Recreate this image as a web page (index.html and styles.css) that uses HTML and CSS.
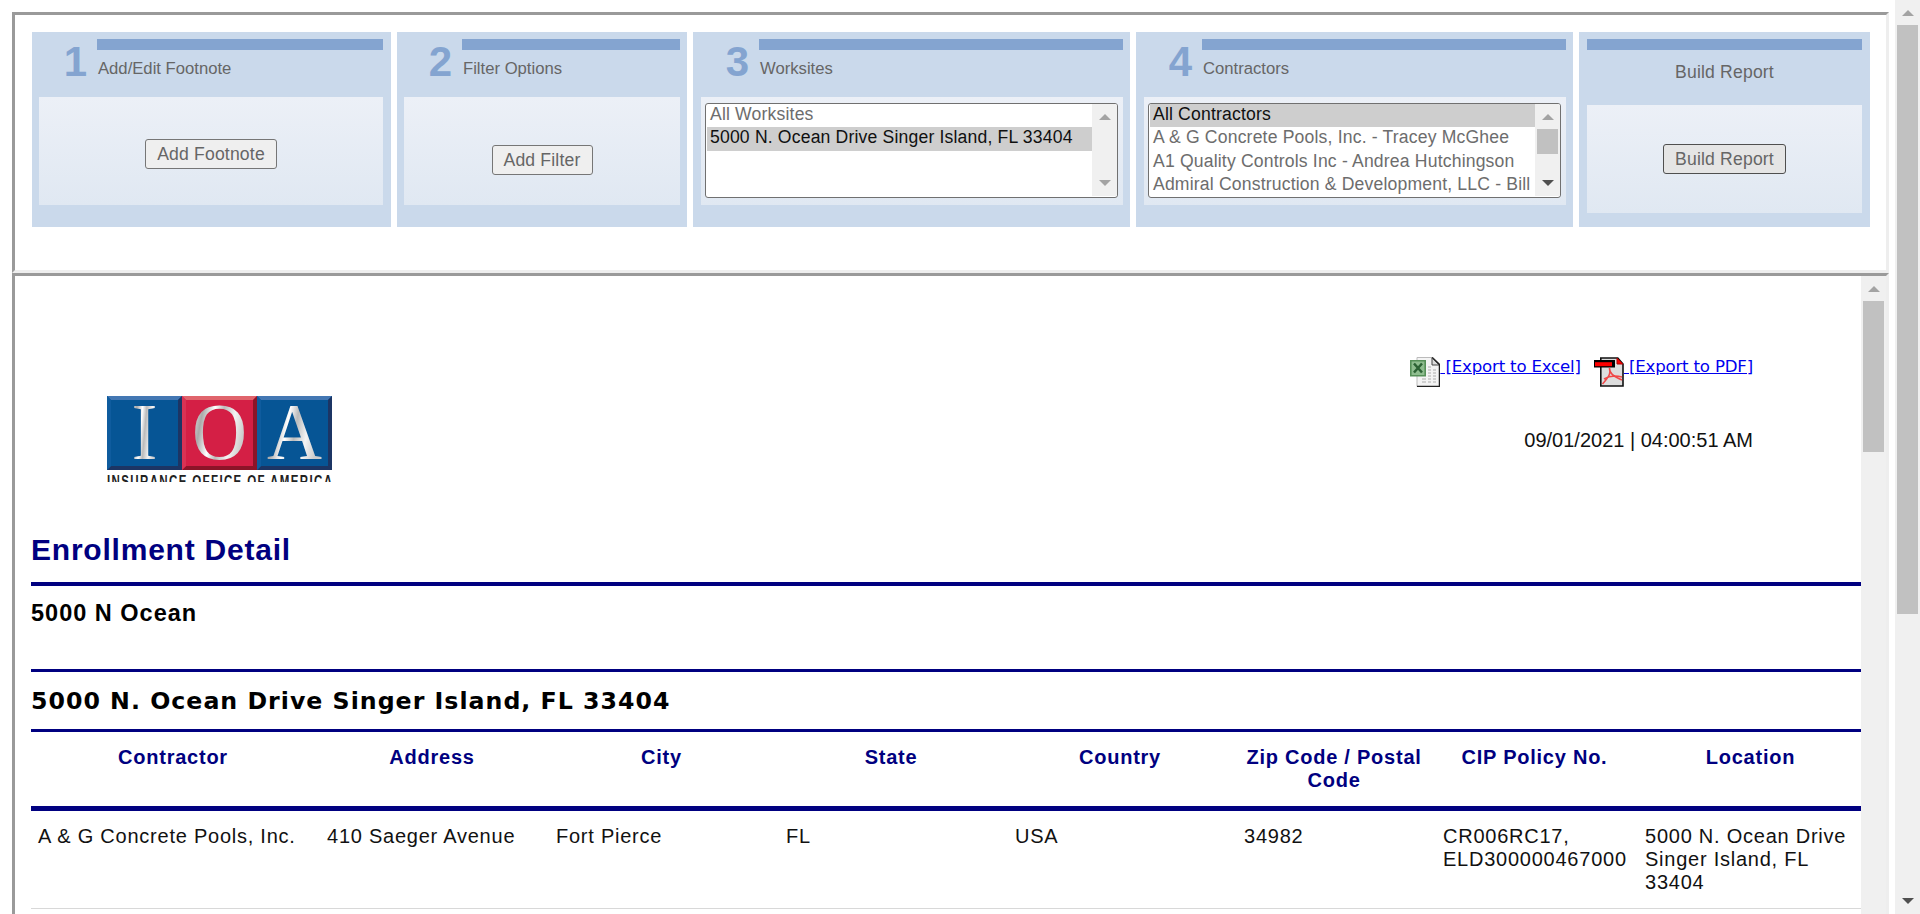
FILE: index.html
```html
<!DOCTYPE html>
<html lang="en">
<head>
<meta charset="utf-8">
<title>Enrollment Detail</title>
<link rel="stylesheet" href="styles.css">
</head>
<body>
<div class="page">
<main class="frames">
  <section class="frame options">
    <div class="panel p1">
      <div class="head"><span class="num">1</span><div class="title"><span class="label">Add/Edit Footnote</span></div></div>
      <div class="well"><button class="btn b1">Add Footnote</button></div>
    </div>
    <div class="panel p2">
      <div class="head"><span class="num">2</span><div class="title"><span class="label">Filter Options</span></div></div>
      <div class="well low"><button class="btn b2">Add Filter</button></div>
    </div>
    <div class="panel p3">
      <div class="head"><span class="num">3</span><div class="title"><span class="label">Worksites</span></div></div>
      <div class="well"><div class="list">
        <ul class="items"><li>All Worksites</li><li class="sel">5000 N. Ocean Drive Singer Island, FL 33404</li></ul>
        <div class="bar"><i class="up"></i><i class="down dim"></i></div>
      </div></div>
    </div>
    <div class="panel p4">
      <div class="head"><span class="num">4</span><div class="title"><span class="label">Contractors</span></div></div>
      <div class="well"><div class="list">
        <ul class="items"><li class="sel">All Contractors</li><li>A &amp; G Concrete Pools, Inc. - Tracey McGhee</li><li>A1 Quality Controls Inc - Andrea Hutchingson</li><li>Admiral Construction &amp; Development, LLC - Bill</li></ul>
        <div class="bar"><i class="up"></i><b class="thumb"></b><i class="down"></i></div>
      </div></div>
    </div>
    <div class="panel p5">
      <div class="build">Build Report</div>
      <div class="well"><button class="btn b5">Build Report</button></div>
    </div>
  </section>
  <section class="frame report">
    <div class="content">
      <div class="top">
        <svg class="logo" width="225" height="86" viewBox="0 0 225 86">
          <defs>
            <linearGradient id="metal" x1="0" y1="0" x2="1" y2="0.3">
              <stop offset="0" stop-color="#fff"/><stop offset=".25" stop-color="#aaa"/><stop offset=".45" stop-color="#fff"/><stop offset=".6" stop-color="#bbb"/><stop offset=".8" stop-color="#f4f4f4"/><stop offset="1" stop-color="#ccc"/>
            </linearGradient>
            <clipPath id="crop"><path d="M0 0h225v86H0z"/></clipPath>
          </defs>
          <g>
            <path fill="#065595" d="M0 0h225v74H0z"/><path fill="#d41f45" d="M75 0h75v74H75z"/>
            <path fill="#4377b3" d="M0 0h75l-4 4H4zM150 0h75l-4 4h-67z"/><path fill="#e0646c" d="M75 0h75l-4 4H79z"/>
            <path fill="#1c3564" d="M75 0v74H0l4-4h67V4zM225 0v74h-75l4-4h67V4z"/><path fill="#8c1428" d="M150 0v74H75l4-4h67V4z"/>
            <path fill="#0f5c9e" d="M0 0l4 4v66l-4 4zM150 0l4 4v66l-4 4z"/><path fill="#d93254" d="M75 0l4 4v66l-4 4z"/>
          </g>
          <g class="logo-letters" fill="url(#metal)" text-anchor="middle"><text x="37.500" y="63" textLength="26" lengthAdjust="spacingAndGlyphs">I</text><text x="112.500" y="63" textLength="55" lengthAdjust="spacingAndGlyphs">O</text><text x="187.500" y="63" textLength="55" lengthAdjust="spacingAndGlyphs">A</text></g>
          <g clip-path="url(#crop)"><text class="logo-name" transform="scale(.72 1)" x="0" y="91" textLength="312.500" lengthAdjust="spacing">INSURANCE OFFICE OF AMERICA</text></g>
        </svg>
        <div class="meta">
          <div class="exports">
            <a class="export" href="#"><svg width="30" height="30" viewBox="0 0 30 30"><path d="M7 .5h16l6.500 6V29.500H7z" fill="#f4f4f4" stroke="#bbb"/><path d="M22 .5l7.500 7V29.500H7" fill="none" stroke="#222" stroke-width="1.500"/><path d="M22 1v7h7z" fill="#ddd" stroke="#444"/><path d="M12 22h4m2 0h3m2 0h3M12 25h4m2 0h3m2 0h3M18 10h3m-3 3h3m2 0h3m-8 3h3m2 0h3m-8 3h3m2 0h3" stroke="#c4c4c4" stroke-width="1.500"/><path d="M.8 3.800h14.400v15H.8z" fill="#8fbd8f" stroke="#569058" stroke-width="1.600"/><path d="M4 6.500l8 9m0-9l-8 9" stroke="#2c6234" stroke-width="2.500"/></svg><span class="link">&nbsp;[Export to Excel]</span></a>
            <a class="export" href="#"><svg width="30" height="30" viewBox="0 0 30 30"><path d="M6.800 1h17l5.200 6v22H6.800z" fill="#ddd" stroke="#111" stroke-width="1.600"/><path d="M23 1l6 6h-6z" fill="#f00" stroke="#a00"/><path d="M0 3h21v7.500H0z" fill="#000"/><path d="M1 5.200h17v4H1z" fill="#f00"/><path d="M15.500 11c1 5 1 7-7 16M15.500 11c0 5 3 8 12.500 12M10 22c5-3 10-4 18-2" fill="none" stroke="#f04848" stroke-width="1.600"/></svg><span class="link">&nbsp;[Export to PDF]</span></a>
          </div>
          <div class="date">09/01/2021 | 04:00:51 AM</div>
        </div>
      </div>
      <h1>Enrollment Detail</h1>
      <h2>5000 N Ocean</h2>
      <h3>5000 N. Ocean Drive Singer Island, FL 33404</h3>
      <div class="grid header"><div>Contractor</div><div>Address</div><div>City</div><div>State</div><div>Country</div><div>Zip Code / Postal Code</div><div>CIP Policy No.</div><div>Location</div></div>
      <div class="grid row"><div>A &amp; G Concrete Pools, Inc.</div><div>410 Saeger Avenue</div><div>Fort Pierce</div><div>FL</div><div>USA</div><div>34982</div><div>CR006RC17, ELD300000467000</div><div>5000 N. Ocean Drive Singer Island, FL 33404</div></div>
    </div>
    <div class="bar"><i class="up"></i><b class="thumb"></b></div>
  </section>
</main>
<div class="bar page-bar"><i class="up"></i><b class="thumb"></b><i class="down"></i></div>
</div>
</body>
</html>
```
FILE: styles.css
```css
* { box-sizing: border-box; }
html, body { height: 914px; overflow: hidden; }
body { margin: 0; background: #fff; font-family: "Liberation Sans", Arial, sans-serif; }
.page { display: flex; height: 914px; overflow: hidden; }
.frames { width: 1895px; height: 914px; padding: 12px 6px 0 12px; flex: none; overflow: hidden; }
.frame { border: 3px solid; border-color: #9a9a9a #eee #eee #9a9a9a; display: flex; }
.options { height: 261px; padding: 17px 16px 0 17px; gap: 6px; align-items: flex-start; }
.panel { height: 195px; background: #cad9eb; padding: 7px 7px 0; flex: none; }
.p1 { width: 359px; padding-right: 8px; }
.p2 { width: 290px; }
.p3, .p4 { width: 437px; padding-left: 8px; }
.p5 { width: 291px; padding: 7px 8px 0; }
.head { display: flex; height: 58px; }
.num { width: 58px; padding: 1px 10px 0 0; text-align: right; font-weight: bold; font-size: 42px; line-height: 44px; color: #84a4d0; }
.title { flex: 1; border-top: 11px solid #84a4d0; color: #666; font-size: 16.670px; padding: 8px 0 0 1px; line-height: 21px; }
.build { height: 66px; border-top: 11px solid #84a4d0; color: #666; text-align: center; font-size: 17.600px; line-height: 22px; padding-top: 11px; letter-spacing: .17px; }
.well { height: 108px; background: linear-gradient(#ecf0f7, #e0e8f2); display: flex; justify-content: center; align-items: center; }
.p1 .well { padding-top: 6px; }
.p2 .well { padding-top: 18px; }
.p3 .well, .p4 .well { align-items: flex-start; padding: 6px 5px 0 4px; }
.btn { height: 30px; border: 1px solid #767676; border-radius: 3px; background: #efefef; color: #666; font: 17.600px "Liberation Sans", Arial, sans-serif; letter-spacing: .17px; padding: 0; white-space: nowrap; }
.b1 { width: 132px; }
.b2 { width: 101px; }
.b5 { width: 123px; background: #e5e5e5; border-color: #4f4f4f; }
.list { display: flex; width: 413px; height: 95px; border: 1px solid #707070; border-radius: 3px; background: #fff; padding: 0 1px 1px 1px; overflow: hidden; }
.items { margin: 0; padding: 0; list-style: none; width: 385px; font-size: 17.600px; letter-spacing: .17px; color: #6d6d6d; line-height: 20px; white-space: nowrap; flex: none; }
.items li { height: 23.400px; padding-left: 3px; }
.items .sel { background: #cecece; color: #101010; }
.bar { width: 25px; background: #f0f0f0; display: flex; flex-direction: column; padding: 10px 2px; flex: none; }
.up, .down { width: 0; height: 0; border: 6px solid transparent; align-self: center; flex: none; }
.up { border-top: 0; border-bottom-color: #a3a3a3; }
.down { border-bottom: 0; border-top-color: #505050; margin-top: auto; }
.down.dim { border-top-color: #a3a3a3; }
.thumb { background: #c1c1c1; width: 21px; margin-top: 9px; height: 25px; }
.page-bar .thumb { height: 589px; }
.page-bar { height: 914px; }
.report { height: 680px; }
.report > .bar { height: 674px; }
.report .thumb { height: 151px; }
.content { width: 1846px; padding-left: 16px; flex: none; overflow: hidden; }
.top { display: flex; justify-content: space-between; height: 250px; padding: 80px 108px 0 76px; }
.logo { margin-top: 40px; flex: none; overflow: visible; }
.logo-letters { font: 80px "Liberation Serif", serif; }
.logo-name { font: bold 16px "Liberation Sans", sans-serif; fill: #222; }
.meta { display: flex; flex-direction: column; align-items: flex-end; }
.exports { display: flex; gap: 13px; height: 57px; padding-top: 1px; }
.export { display: flex; color: #0000ee; text-decoration: none; }
.export svg { flex: none; }
.link { font: 16.600px "DejaVu Sans", Verdana, sans-serif; line-height: 20px; height: 20px; text-decoration: underline; white-space: nowrap; letter-spacing: -.18px; }
.date { margin-top: 15px; font-size: 20px; line-height: 24px; color: #111; }
h1, h2, h3 { margin: 0; border-bottom: 3px solid #000080; }
h1 { color: #000080; font-size: 30px; line-height: 34px; height: 60px; padding-top: 7px; letter-spacing: .78px; border-bottom-width: 4px; }
h2 { font-size: 23.500px; line-height: 28px; height: 86px; padding-top: 13px; letter-spacing: 1px; }
h3 { font: bold 23.680px "DejaVu Sans", Verdana, sans-serif; line-height: 28px; height: 60px; padding-top: 15px; letter-spacing: 1px; }
.grid { display: grid; grid-template-columns: 289px 229px 230px 229px 229px 199px 202px 223px; letter-spacing: .76px; line-height: 23px; font-size: 20px; }
.grid > div { padding: 0 7px; }
.header { color: #000080; font-weight: bold; text-align: center; height: 79px; padding-top: 14px; border-bottom: 5px solid #000080; }
.header > div { padding-right: 12px; }
.header > div:last-child { padding: 0 6px 0 8px; }
.row { height: 98px; padding-top: 14px; border-bottom: 1px solid #d8d8d8; color: #111; }
```
